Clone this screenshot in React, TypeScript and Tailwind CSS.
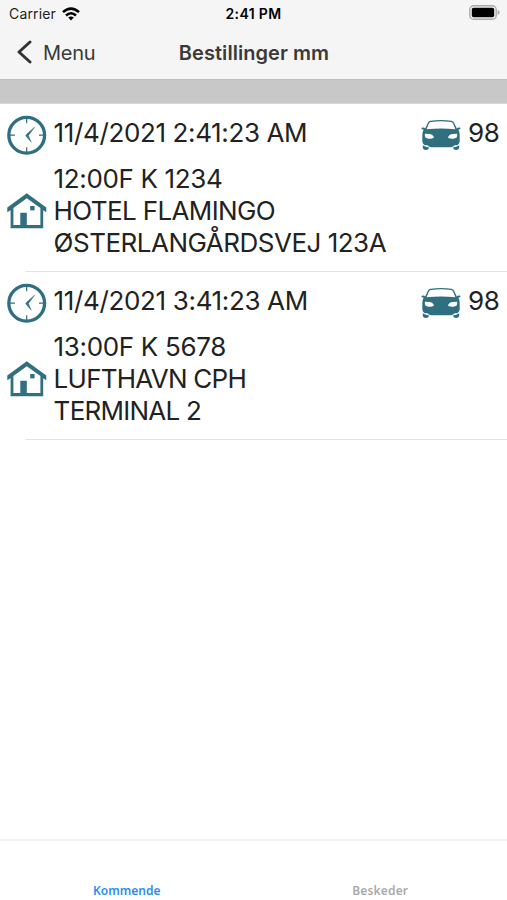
import React from "react";

type Line = { text: string; spacing: string };
type Booking = { time: Line; car: string; lines: Line[] };

const bookings: Booking[] = [
  {
    time: { text: "11/4/2021 2:41:23 AM", spacing: "tracking-[-0.37px]" },
    car: "98",
    lines: [
      { text: "12:00F K 1234", spacing: "tracking-[-0.35px]" },
      { text: "HOTEL FLAMINGO", spacing: "tracking-[-0.62px]" },
      { text: "ØSTERLANGÅRDSVEJ 123A", spacing: "tracking-[-0.5px]" },
    ],
  },
  {
    time: { text: "11/4/2021 3:41:23 AM", spacing: "tracking-[-0.35px]" },
    car: "98",
    lines: [
      { text: "13:00F K 5678", spacing: "tracking-[-0.33px]" },
      { text: "LUFTHAVN CPH", spacing: "tracking-[-0.75px]" },
      { text: "TERMINAL 2", spacing: "tracking-[-0.75px]" },
    ],
  },
];

function ClockIcon() {
  return (
    <svg viewBox="0 0 40 40" className="-mt-0.5 h-10 w-10 shrink-0" fill="none" stroke="#2f6f80">
      <circle cx="19.7" cy="20.2" r="17.9" strokeWidth="3.3" />
      <path d="M19.7 3.2v5M19.7 32.2v5M3 20.2h5M32 20.2h5" strokeWidth="1.2" />
      <path d="M27.6 12.2 20.4 18.4Q17.8 20.2 19.4 21.6L24.2 27.2 21.4 20.6Z" fill="#2f6f80" strokeWidth=".5" />
    </svg>
  );
}

function HouseIcon() {
  return (
    <svg viewBox="0 0 40 36" className="h-9 w-10 shrink-0" fill="#2f6f80">
      <path d="M19.8 .2 39.3 14.6V19.2L36.2 17.2V35.2H3.6V17.2L.3 19.2V14.6ZM19.8 5.2 6.4 15V32H13.3V19.8H19.8V32H33.4V15Z" fillRule="evenodd" />
      <path d="M23.2 13h4.4v4.4h-4.4z" />
    </svg>
  );
}

function CarIcon() {
  return (
    <svg viewBox="0 0 40 32" className="h-8 w-10 shrink-0" fill="#2f6f80">
      <path
        fillRule="evenodd"
        d="M9.5 1.7Q20 .1 30.5 1.7Q32.4 2 33.3 4L35.8 9.5Q36.6 8.3 39.3 8.7Q40.3 10.2 37.4 10.8Q38.7 13 38.7 16V22Q38.4 25.5 35.8 26.2H4.2Q1.6 25.5 1.3 22V16Q1.3 13 2.6 10.8Q-.3 10.2.7 8.7Q3.4 8.3 4.2 9.5L6.7 4Q7.6 2 9.5 1.7ZM10 3Q8.5 3.2 7.8 4.8L5.6 10.2Q20 8.8 34.4 10.2L32.2 4.8Q31.5 3.2 30 3Q20 1.7 10 3ZM4 14.7Q3 18.8 6.6 19.6 10 20.2 13 18.8 12.2 15.6 8.8 15ZM36 14.7Q37 18.8 33.4 19.6 30 20.2 27 18.8 27.8 15.6 31.2 15Z"
      />
      <path d="M6 25.5H34Q32.5 28 30 28.2H10Q7.5 28 6 25.5Z" />
      <path d="M1.8 26.2Q4.6 28.3 8.2 28.4 7.6 31 4.8 31T1.8 28.6ZM38.2 26.2Q35.4 28.3 31.8 28.4 32.4 31 35.2 31T38.2 28.6Z" />
    </svg>
  );
}

function BookingRow({ booking }: { booking: Booking }) {
  return (
    <li className="flex h-[168px] flex-col pt-[13px]">
      <div className="flex h-10 items-start pl-[7px] pr-[7px]">
        <ClockIcon />
        <span className={`ml-[6.6px] leading-8 ${booking.time.spacing}`}>{booking.time.text}</span>
        <span className="ml-auto flex">
          <span className="pt-0.5"><CarIcon /></span>
          <span className="ml-[7.5px] w-8 leading-8 tracking-[-0.3px]">{booking.car}</span>
        </span>
      </div>
      <div className="mt-1.5 flex items-center pl-[7px]">
        <HouseIcon />
        <div className="ml-[6.6px] flex flex-col">
          {booking.lines.map((line) => (
            <span key={line.text} className={`h-8 leading-8 ${line.spacing}`}>{line.text}</span>
          ))}
        </div>
      </div>
      <div className="ml-[26px] mt-auto h-px bg-[#e2e2e2]" />
    </li>
  );
}

export default function App() {
  return (
    <div className="flex h-[900px] w-[507px] flex-col overflow-hidden bg-white font-['Inter',sans-serif] text-[#222]">
      <header className="h-20 border-b border-[#c0c0c0] bg-[#f5f5f5]">
        <div className="grid h-[27px] grid-cols-3 items-center pl-[9px] pr-[7px] text-[14px] text-[#222]">
          <div className="flex items-center gap-1.5">
            <span className="tracking-[0.15px]">Carrier</span>
            <svg viewBox="0 0 18 14" className="h-[14px] w-[18px]" fill="none" stroke="#000" strokeWidth="2.6">
              <path d="M1 5.1Q9-2 17 5.1M4 8.4Q9 4.1 14 8.4" />
              <path d="M6.2 10.6Q9 8.4 11.8 10.6L9 13.4Z" fill="#000" stroke="none" />
            </svg>
          </div>
          <span className="-ml-0.5 text-center font-semibold tracking-[0.35px] text-black">2:41 PM</span>
          <svg viewBox="0 0 31 15" className="-mt-0.5 h-[15px] w-[31px] justify-self-end">
            <rect x=".8" y=".8" width="26.4" height="13.4" rx="3.8" fill="#f5f5f5" stroke="#aaa" strokeWidth="1.4" />
            <rect x="2.8" y="2.8" width="22.4" height="9.4" rx="1.8" />
            <path d="M28.6 5q2 .8 2 2.5t-2 2.5z" fill="#aaa" />
          </svg>
        </div>
        <div className="grid h-[51px] grid-cols-[1fr_auto_1fr] items-center text-[20px] text-[#3a3a3a]">
          <div className="flex items-center pl-[17px]">
            <svg viewBox="0 0 15 24" className="-mt-0.5 h-6 w-[15px]" fill="none" stroke="#333" strokeWidth="3" strokeLinecap="round" strokeLinejoin="round">
              <path d="M13 2 2 12 13 22" />
            </svg>
            <span className="ml-[11px] tracking-[-0.3px]">Menu</span>
          </div>
          <h1 className="ml-px font-semibold tracking-[0.05px]">Bestillinger mm</h1>
        </div>
      </header>
      <div className="h-6 border-b border-[#d8d8d8] bg-[#c8c8c8]" />
      <ul className="flex-1 text-[26px]">
        {bookings.map((booking) => (
          <BookingRow key={booking.time.text} booking={booking} />
        ))}
      </ul>
      <nav className="grid h-[61px] grid-cols-2 border-t-2 border-[#f0f0f0] pt-[41px] text-center font-['Noto_Sans',sans-serif] text-[12px] font-semibold leading-[18px]">
        <span className="text-[#2f8cf0]">Kommende</span>
        <span className="tracking-[0.15px] text-[#aaa]">Beskeder</span>
      </nav>
    </div>
  );
}
